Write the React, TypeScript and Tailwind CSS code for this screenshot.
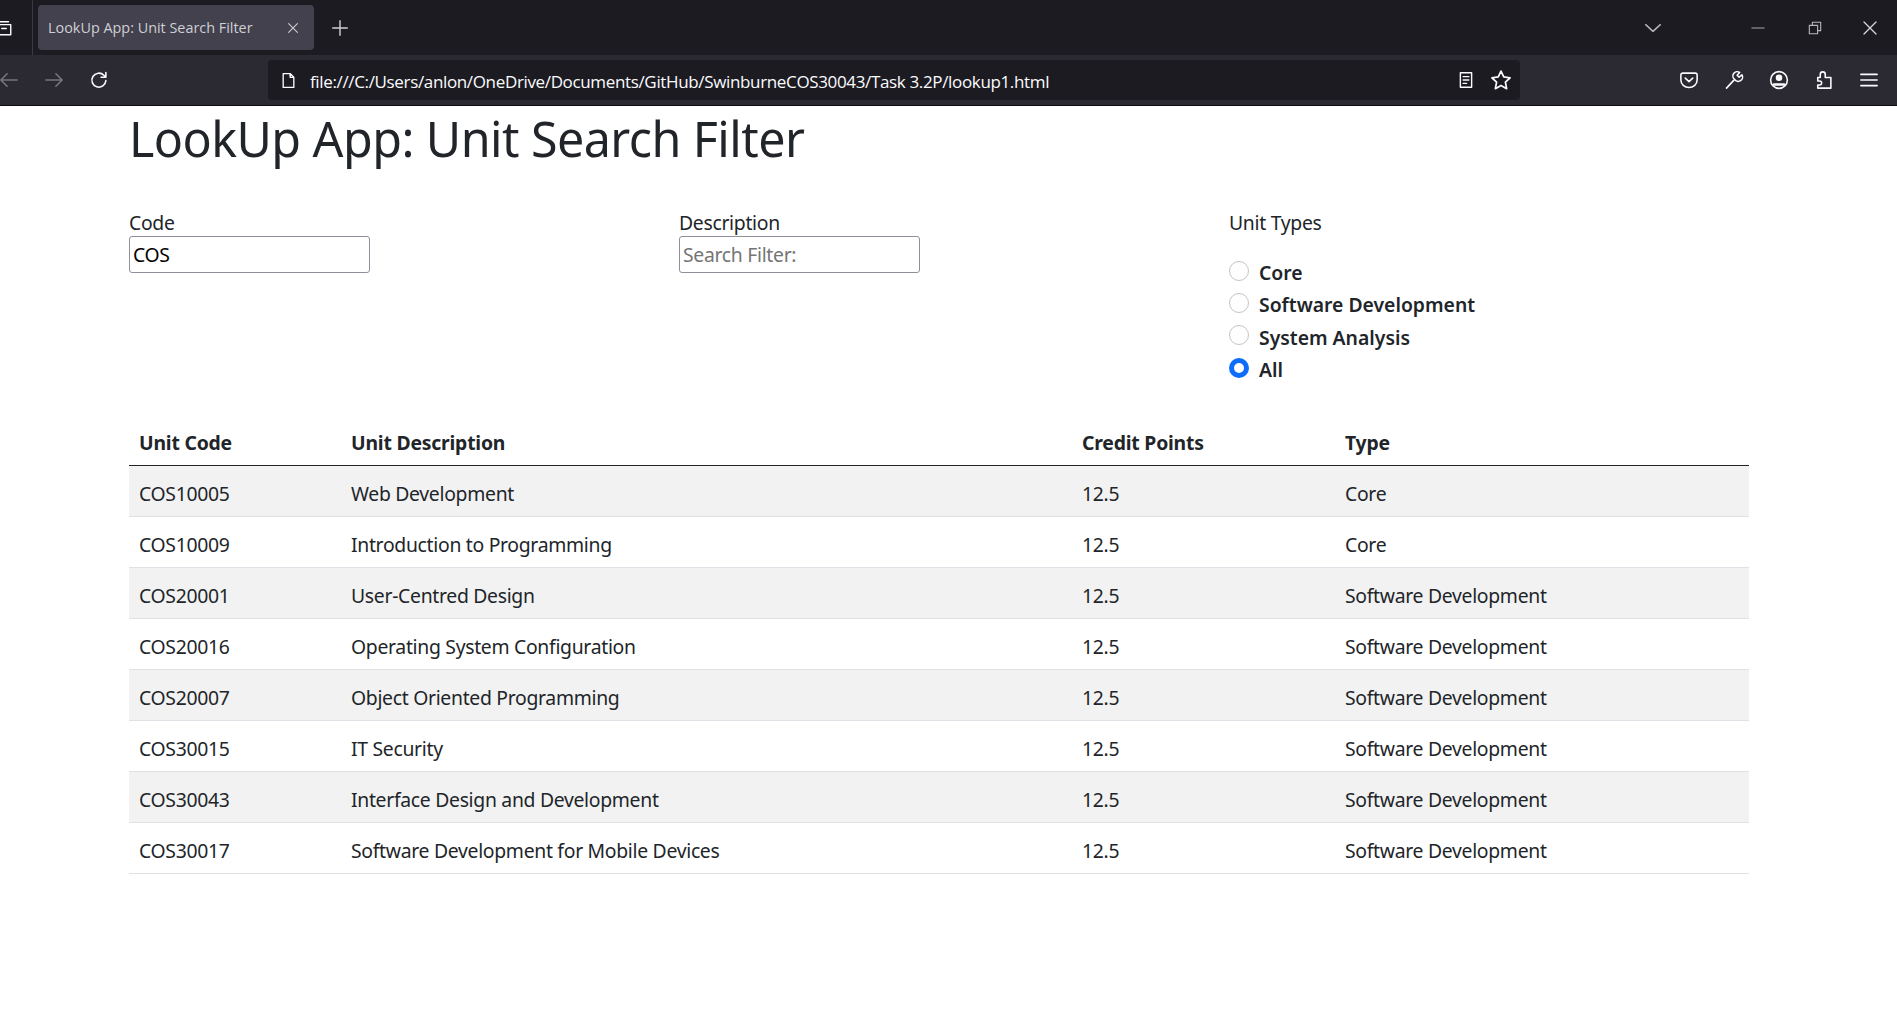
import { ReactNode } from "react";

const units = [
	["COS10005", "Web Development", "12.5", "Core"],
	["COS10009", "Introduction to Programming", "12.5", "Core"],
	["COS20001", "User-Centred Design", "12.5", "Software Development"],
	["COS20016", "Operating System Configuration", "12.5", "Software Development"],
	["COS20007", "Object Oriented Programming", "12.5", "Software Development"],
	["COS30015", "IT Security", "12.5", "Software Development"],
	["COS30043", "Interface Design and Development", "12.5", "Software Development"],
	["COS30017", "Software Development for Mobile Devices", "12.5", "Software Development"],
];

const unitTypes = ["Core", "Software Development", "System Analysis", "All"];

const Icon = ({ children, className = "w-4 h-4" }: { children: ReactNode; className?: string }) => (
	<svg viewBox="0 0 16 16" fill="none" stroke="currentColor" strokeWidth="1.25" strokeLinecap="round" strokeLinejoin="round" className={className}>
		{children}
	</svg>
);

const BrowserChrome = () => (
	<header className="font-['Open_Sans',sans-serif]">
		{/* tab strip */}
		<div className="h-[55px] bg-[#1c1b22] flex items-center text-[#fbfbfe]">
			<div className="w-[33px] h-full flex items-center border-r border-[#3a3944] overflow-hidden">
				<Icon className="w-[18px] h-[18px] -ml-[5px] shrink-0">
					<path d="M2 5h12v9h-12zM4 2.5h8M6 8.5h4" />
				</Icon>
			</div>
			<div className="ml-[5px] w-[276px] h-[45px] rounded bg-[#42414d] flex items-center justify-between pl-[10px] pr-[14px]">
				<span className="text-[14.4px] text-[#cfcfd4] tracking-[0px]">LookUp App: Unit Search Filter</span>
				<Icon className="w-[14px] h-[14px] text-[#cfcfd4]"><path d="M3 3l10 10M13 3l-10 10" /></Icon>
			</div>
			<Icon className="w-[18px] h-[18px] ml-[17px] text-[#cfcfd4]"><path d="M8 1.5v13M1.5 8h13" /></Icon>
			<div className="flex-1" />
			<Icon className="w-[18px] h-[18px] text-[#b8b8bc] mr-[19px]"><path d="M1.5 5l6.5 6 6.5-6" /></Icon>
			<div className="w-[84px] flex justify-end"><Icon className="w-[14px] h-[14px] text-[#a8a8ac]"><path d="M1 8h14" /></Icon></div>
			<div className="w-[57px] flex justify-end"><Icon className="w-[14px] h-[14px] text-[#b8b8bc]"><path d="M1.5 5h9.5v9.5h-9.5zM5 5v-3.5h9.5v9.5h-3.5" /></Icon></div>
			<div className="w-[56px] flex justify-end"><Icon className="w-[16px] h-[16px] text-[#d8d8dc]"><path d="M2 2l12 12M14 2l-12 12" /></Icon></div>
			<div className="w-[19px]" />
		</div>
		{/* toolbar */}
		<div className="h-[51px] bg-[#2b2a33] flex items-center text-[#fbfbfe] border-b border-[#0c0c0d]">
			<Icon className="w-[20px] h-[20px] -ml-[1px] text-[#77767e]"><path d="M14.5 8h-13M6.5 3l-5 5 5 5" /></Icon>
			<Icon className="w-[20px] h-[20px] ml-[25px] text-[#77767e]"><path d="M1.5 8h13M9.5 3l5 5-5 5" /></Icon>
			<Icon className="w-[20px] h-[20px] ml-[25px]"><path d="M13.5 8.5a5.6 5.6 0 1 1-1.6-4.3l1.6 1.6M13.5 2v3.8h-3.8" /></Icon>
			<div className="ml-[159px] w-[1252px] h-[40px] rounded bg-[#1c1b22] flex items-center pl-[12px]">
				<Icon className="w-[17px] h-[19px]"><path d="M3 1.5h6.5l3.5 3.5v9.5h-10zM9.5 1.5v3.5h3.5" /></Icon>
				<span className="ml-[13px] text-[17px] tracking-[-0.35px] translate-y-[1px]">file:///C:/Users/anlon/OneDrive/Documents/GitHub/SwinburneCOS30043/Task 3.2P/lookup1.html</span>
				<div className="flex-1" />
				<Icon className="w-[18px] h-[18px]"><path d="M3 1.5h10v13h-10zM5.5 5h5M5.5 8h5M5.5 11h3" /></Icon>
				<Icon className="w-[22px] h-[22px] ml-[15px] mr-[8px]"><path d="M8 1.5l2 4.3 4.6.6-3.4 3.2.9 4.7L8 12l-4.1 2.3.9-4.7-3.4-3.2 4.6-.6z" /></Icon>
			</div>
			<Icon className="w-[20px] h-[20px] ml-[159px]"><path d="M3 2.5h10a1.5 1.5 0 0 1 1.5 1.5v4a6.5 6 0 0 1-13 0v-4a1.5 1.5 0 0 1 1.5-1.5zM5 6.5l3 2.8 3-2.8" /></Icon>
			<Icon className="w-[20px] h-[20px] ml-[25px]"><path d="M2 14.5l6.5-7M8.5 7.5a3.4 3.4 0 0 1 4-5.5l-2 2.2 1.6 1.6 2.2-2a3.4 3.4 0 0 1-5.8 3.7" /></Icon>
			<Icon className="w-[20px] h-[20px] ml-[25px]">
				<circle cx="8" cy="8" r="6.7" />
				<circle cx="8" cy="6.2" r="2" fill="currentColor" />
				<path d="M4 11.5h8" strokeWidth="2" />
			</Icon>
			<Icon className="w-[20px] h-[20px] ml-[25px]"><path d="M5 6V3.5a2 2 0 0 1 4 0V6h4.5v8.5H3v-2.5h1.5a1.6 1.6 0 0 0 0-3.2H3V6z" /></Icon>
			<Icon className="w-[20px] h-[20px] ml-[25px]"><path d="M1.5 3.5h13M1.5 8h13M1.5 12.5h13" /></Icon>
		</div>
	</header>
);

const App = () => {
	return (
		<div className="min-h-[1018px] bg-white text-[#212529] font-['Noto_Sans',sans-serif] text-[19.36px] leading-[29px] tracking-[-0.3px]">
			<BrowserChrome />
			<main className="w-[1620px] ml-[129px]">
				<h1 className="text-[48.4px] leading-[58px] font-normal tracking-[-0.55px] pt-[3px]">LookUp App: Unit Search Filter</h1>

				<div className="grid grid-cols-[550px_550px_520px] mt-[41px]">
					<div>
						<label className="block h-[28px]" htmlFor="code">Code</label>
						<input
							id="code"
							type="text"
							defaultValue="COS"
							className="block w-[241px] h-[37px] border border-[#8f8f9d] rounded-[3px] px-[3px] text-black outline-none"
						/>
					</div>
					<div>
						<label className="block h-[28px]" htmlFor="description">Description</label>
						<input
							id="description"
							type="text"
							placeholder="Search Filter:"
							className="block w-[241px] h-[37px] border border-[#8f8f9d] rounded-[3px] px-[3px] text-black outline-none placeholder:text-[#757575]"
						/>
					</div>
					<div>
						<div className="h-[29px]">Unit Types</div>
						<div className="mt-[21px] flex flex-col gap-[3.3px]">
							{unitTypes.map((type) => (
								<label key={type} className="flex items-center h-[29px] font-semibold tracking-[0px]">
									<span
										className={
											type === "All"
												? "w-[20px] h-[20px] rounded-full border-[5.5px] border-[#0d6efd] bg-white -mt-[2px]"
												: "w-[20px] h-[20px] rounded-full border border-[#c4c4c4] bg-white -mt-[4px]"
										}
									/>
									<span className="ml-[10px]">{type}</span>
								</label>
							))}
						</div>
					</div>
				</div>

				<table className="w-[1620px] table-fixed border-collapse mt-[31px]">
					<colgroup>
						<col className="w-[212px]" />
						<col className="w-[731px]" />
						<col className="w-[263px]" />
						<col className="w-[414px]" />
					</colgroup>
					<thead>
						<tr className="h-[51px] border-b border-[#212529] text-left">
							<th className="px-[10px] pt-[4px] font-bold tracking-[-0.2px]">Unit Code</th>
							<th className="px-[10px] pt-[4px] font-bold tracking-[-0.2px]">Unit Description</th>
							<th className="px-[10px] pt-[4px] font-bold tracking-[-0.2px]">Credit Points</th>
							<th className="px-[10px] pt-[4px] font-bold tracking-[-0.2px]">Type</th>
						</tr>
					</thead>
					<tbody>
						{units.map((unit, index) => (
							<tr key={unit[0]} className={index % 2 === 0 ? "h-[51px] border-b border-[#dee2e6] bg-[#f2f2f2]" : "h-[51px] border-b border-[#dee2e6]"}>
								{unit.map((cell) => (
									<td key={cell} className="px-[10px] pt-[4px]">{cell}</td>
								))}
							</tr>
						))}
					</tbody>
				</table>
			</main>
		</div>
	);
};

export default App;
